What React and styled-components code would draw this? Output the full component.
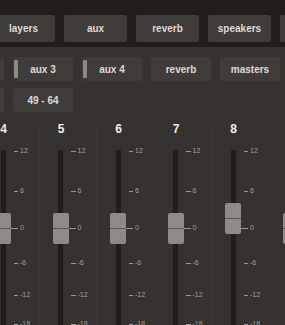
import React from 'react'
import styled, { createGlobalStyle } from 'styled-components'

const Global = createGlobalStyle`
  html, body {
    margin: 0;
    padding: 0;
    background: #36322f;
    overflow: hidden;
    font-family: "Liberation Sans", Arial, sans-serif;
  }
`

const Page = styled.div`
  width: 285px;
  height: 325px;
  overflow: hidden;
`

const TopBar = styled.div`
  height: 47px;
  background: #221e1c;
  display: flex;
  align-items: flex-start;
  gap: 9px;
  padding-top: 15px;
  box-sizing: border-box;
  margin-left: -8px;
`

const TabButton = styled.div`
  flex: 0 0 63px;
  height: 27px;
  border-radius: 2px;
  background: #403c3a;
  color: #dedad7;
  font-size: 10px;
  font-weight: bold;
  display: flex;
  align-items: center;
  justify-content: center;
`

const Banks = styled.div`
  padding-top: 10px;
  display: flex;
  flex-direction: column;
  gap: 7px;
`

const BankRow = styled.div`
  display: flex;
  gap: 9px;
  margin-left: -56px;
`

const BankButton = styled.div`
  flex: 0 0 60px;
  height: 24px;
  border-radius: 2px;
  background: #403c3a;
  color: #dedad7;
  font-size: 10px;
  font-weight: bold;
  display: flex;
  align-items: center;
  padding-left: 1px;
  box-sizing: border-box;
`

const Indicator = styled.span`
  flex: 0 0 4px;
  height: 18px;
  background: ${p => (p.$on ? '#8c8885' : 'transparent')};
  border-radius: 1px;
`

const BankLabel = styled.span`
  flex: 1;
  text-align: center;
  padding-right: 5px;
`

const Strips = styled.div`
  display: flex;
  margin-left: -19px;
  margin-top: 10px;
`

const Strip = styled.div`
  flex: 0 0 57.5px;
  display: flex;
  flex-direction: column;
  box-sizing: border-box;
  border-left: 1px solid #3b3734;
`

const Number = styled.div`
  width: 43px;
  height: 14px;
  line-height: 14px;
  text-align: center;
  color: #f2efec;
  font-size: 12px;
  font-weight: bold;
`

const FaderArea = styled.div`
  position: relative;
  margin-top: 14px;
  height: 180px;
`

const Track = styled.div`
  margin-left: 18.5px;
  width: 5px;
  height: 100%;
  background: #221e1c;
`

const Cap = styled.div`
  position: absolute;
  left: 13px;
  width: 16px;
  height: 31px;
  border-radius: 2px;
  background: #8e8a87;
  display: flex;
  align-items: center;

  &::after {
    content: '';
    width: 100%;
    height: 1px;
    background: #5a5653;
  }
`

const Tick = styled.div`
  position: absolute;
  left: ${p => (p.$zero ? 29 : 31.5)}px;
  width: ${p => (p.$zero ? 7 : 4.5)}px;
  height: 1px;
  background: #9a9693;
`

const TickLabel = styled.div`
  position: absolute;
  left: 38px;
  height: 8px;
  line-height: 8px;
  margin-top: -4px;
  font-size: 7px;
  color: #a5a19e;
`

const scale = [
  ['12', 1],
  ['6', 41],
  ['0', 78],
  ['-6', 113],
  ['-12', 145],
  ['-18', 174],
]

const channels = [
  { n: 4, level: 0 },
  { n: 5, level: 0 },
  { n: 6, level: 0 },
  { n: 7, level: 0 },
  { n: 8, level: 10 },
  { n: 9, level: 0 },
]

const tabs = ['layers', 'aux', 'reverb', 'speakers', '']

const App = () => {
  return (
    <Page>
      <Global />
      <TopBar>
        {tabs.map((t, i) => (
          <TabButton key={i}>{t}</TabButton>
        ))}
      </TopBar>
      <Banks>
        <BankRow>
          <BankButton><Indicator $on /><BankLabel /></BankButton>
          <BankButton><Indicator $on /><BankLabel>aux 3</BankLabel></BankButton>
          <BankButton><Indicator $on /><BankLabel>aux 4</BankLabel></BankButton>
          <BankButton><Indicator /><BankLabel>reverb</BankLabel></BankButton>
          <BankButton><Indicator /><BankLabel>masters</BankLabel></BankButton>
        </BankRow>
        <BankRow>
          <BankButton><Indicator /><BankLabel /></BankButton>
          <BankButton><Indicator /><BankLabel>49 - 64</BankLabel></BankButton>
        </BankRow>
      </Banks>
      <Strips>
        {channels.map(c => (
          <Strip key={c.n}>
            <Number>{c.n}</Number>
            <FaderArea>
              <Track />
              {scale.map(([label, y]) => (
                <React.Fragment key={label}>
                  <Tick $zero={label === '0'} style={{ top: y }} />
                  <TickLabel style={{ top: y }}>{label}</TickLabel>
                </React.Fragment>
              ))}
              <Cap style={{ top: 78 - 15.5 - c.level }} />
            </FaderArea>
          </Strip>
        ))}
      </Strips>
    </Page>
  )
}

export default App
